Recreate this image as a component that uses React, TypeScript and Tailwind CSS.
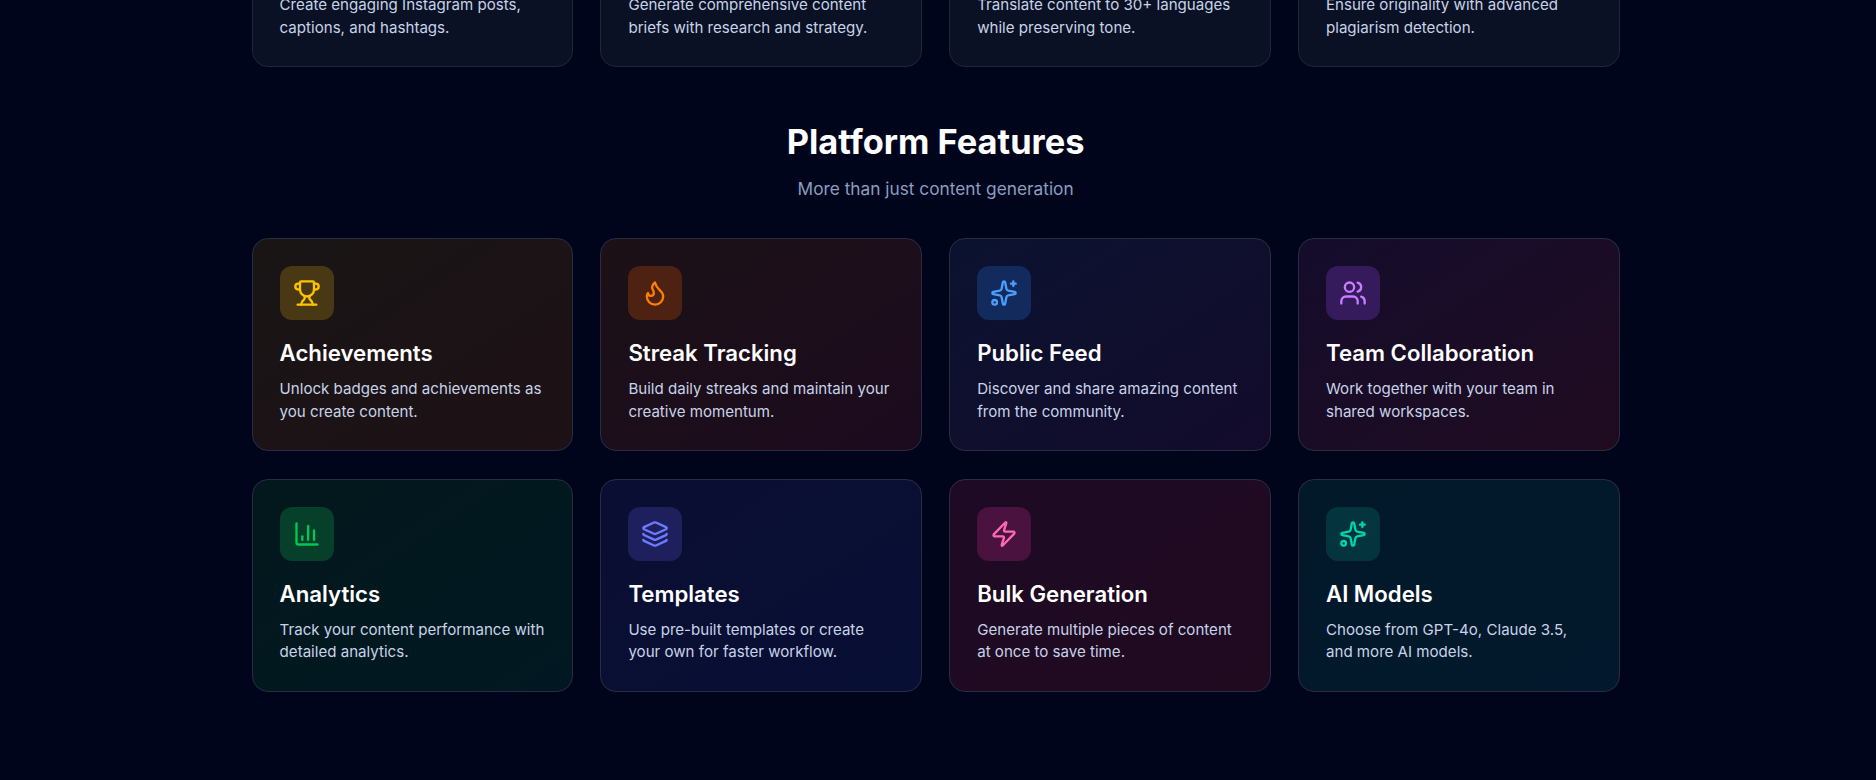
import { Trophy, Flame, Sparkles, Users, BarChart3, Layers, Zap } from "lucide-react";

const top = [
  ["Create engaging Instagram posts,", "captions, and hashtags."],
  ["Generate comprehensive content", "briefs with research and strategy."],
  ["Translate content to 30+ languages", "while preserving tone."],
  ["Ensure originality with advanced", "plagiarism detection."],
];

const features = [
  { t: "Achievements", a: "Unlock badges and achievements as", b: "you create content.", I: Trophy, ic: "text-[#ffc400] bg-[#493814]", bg: "bg-gradient-to-br from-[#191515] to-[#1d1116]" },
  { t: "Streak Tracking", a: "Build daily streaks and maintain your", b: "creative momentum.", I: Flame, ic: "text-[#ff7f00] bg-[#4e2212]", bg: "bg-gradient-to-br from-[#1b1116] to-[#1c0a1e]" },
  { t: "Public Feed", a: "Discover and share amazing content", b: "from the community.", I: Sparkles, ic: "text-[#4a9eff] bg-[#122a5c]", bg: "bg-gradient-to-br from-[#0a1230] to-[#130b2b]" },
  { t: "Team Collaboration", a: "Work together with your team in", b: "shared workspaces.", I: Users, ic: "text-[#c77dff] bg-[#351a5c]", bg: "bg-gradient-to-br from-[#140c2c] to-[#200b20]" },
  { t: "Analytics", a: "Track your content performance with", b: "detailed analytics.", I: BarChart3, ic: "text-[#00c853] bg-[#07402a]", bg: "bg-gradient-to-br from-[#03181c] to-[#011822]" },
  { t: "Templates", a: "Use pre-built templates or create", b: "your own for faster workflow.", I: Layers, ic: "text-[#6c7bff] bg-[#1e205e]", bg: "bg-gradient-to-br from-[#0b0e33] to-[#080f34]" },
  { t: "Bulk Generation", a: "Generate multiple pieces of content", b: "at once to save time.", I: Zap, ic: "text-[#ff69b4] bg-[#4a123e]", bg: "bg-gradient-to-br from-[#1e0a24] to-[#1f0a20]" },
  { t: "AI Models", a: "Choose from GPT-4o, Claude 3.5,", b: "and more AI models.", I: Sparkles, ic: "text-[#00d4aa] bg-[#04353e]", bg: "bg-gradient-to-br from-[#02192a] to-[#02182c]" },
];

export default function App() {
  return (
    <div className="h-[780px] overflow-hidden bg-[#01051b] font-['Inter',sans-serif]">
      <div className="ml-[251.6px] w-[1368px] -mt-[40px]">
        <div className="grid grid-cols-4 gap-[27.2px]">
          {top.map((c) => (
            <div key={c[0]} className="rounded-2xl border border-[#1e2638] bg-[#0a1124] px-[27px] pt-[32px] h-[107px] text-[15.1px] leading-[23px] text-[#c8d3e8]">
              <p>{c[0]}</p>
              <p>{c[1]}</p>
            </div>
          ))}
        </div>
        <h2 className="mt-[55px] text-center text-[34.4px] leading-[40px] font-bold text-white">Platform Features</h2>
        <p className="mt-[14px] text-center text-[17.3px] leading-[26px] text-[#8a9ec0]">More than just content generation</p>
        <div className="mt-[36px] grid grid-cols-4 gap-[27.2px]">
          {features.map(({ t, a, b, I, ic, bg }) => (
            <div key={t} className={`rounded-2xl border border-[#2a2d42] h-[213.4px] p-[27px] ${bg}`}>
              <div className={`flex h-[54px] w-[54px] items-center justify-center rounded-xl ${ic}`}>
                <I size={28} />
              </div>
              <h3 className="mt-[18px] text-[22.2px] leading-[30px] font-semibold text-white">{t}</h3>
              <p className="mt-[10px] text-[15.1px] leading-[22.5px] text-[#c8d3e8]">{a}<br />{b}</p>
            </div>
          ))}
        </div>
      </div>
    </div>
  );
}
